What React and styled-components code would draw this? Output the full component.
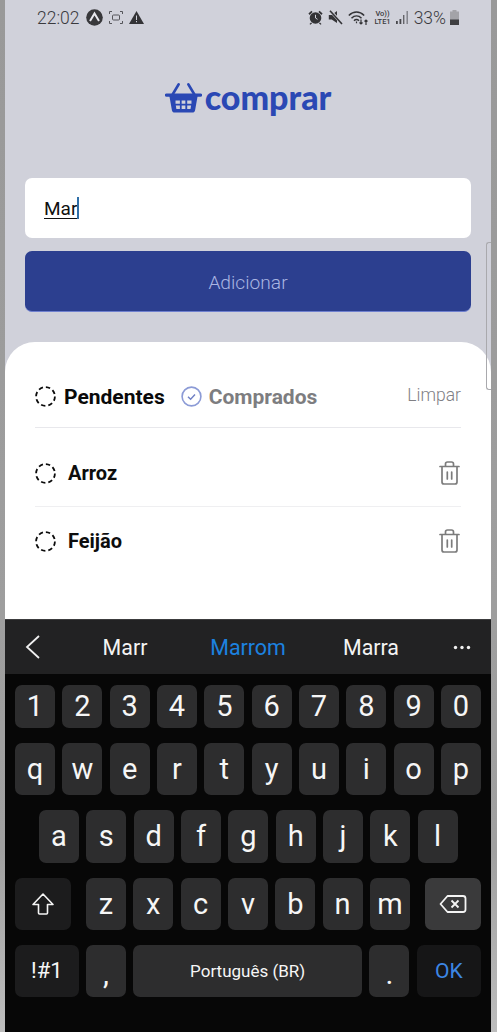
import React from 'react'
import styled, { createGlobalStyle } from 'styled-components'

const Global = createGlobalStyle`
  html, body { margin: 0; padding: 0; background: #9c9c9c; }
  * { box-sizing: border-box; }
`

const Page = styled.div`
  width: 497px;
  height: 1032px;
  padding: 0 6px 0 5px;
  overflow: hidden;
  background: linear-gradient(#999 0, #a0a0a0 850px, #bdbdbd 1032px);
  font-family: Roboto, "Liberation Sans", sans-serif;
`

const Screen = styled.div`
  position: relative;
  height: 100%;
  display: flex;
  flex-direction: column;
  background: #d0d1da;
`

const StatusBar = styled.div`
  height: 35px;
  display: flex;
  align-items: center;
  justify-content: space-between;
  padding: 0 31px 0 32px;
  color: #3a3a3d;
  font-size: 17.5px;
  font-weight: 300;
`

const StatusGroup = styled.div`
  display: flex;
  align-items: center;
  gap: ${props => props.gap || 5}px;
`

const Lte = styled.span`
  display: flex;
  flex-direction: column;
  align-items: center;
  font-size: 7.5px;
  line-height: 7.5px;
  font-weight: 500;
`

const Logo = styled.div`
  display: flex;
  align-items: center;
  justify-content: center;
  gap: 3px;
  margin-top: 46px;
  height: 34px;
  color: #2a48b4;
`

const LogoText = styled.span`
  font-family: Lato, Roboto, sans-serif;
  font-weight: 900;
  font-size: 34px;
  line-height: 34px;
  margin-top: -2px;
`

const Form = styled.div`
  display: flex;
  flex-direction: column;
  gap: 13px;
  padding: 0 20px;
  margin-top: 63px;
`

const Input = styled.div`
  height: 60px;
  background: #fff;
  border-radius: 7px;
  display: flex;
  align-items: center;
  padding-left: 19px;
  font-size: 19px;
  color: #111;
`

const Typed = styled.span`
  text-decoration: underline;
  text-underline-offset: 3px;
  text-decoration-thickness: 1px;
`

const Caret = styled.span`
  width: 2px;
  height: 22px;
  background: #2f6fa8;
`

const AddButton = styled.div`
  height: 61px;
  padding-top: 2px;
  background: #2c3f8f;
  border-radius: 7px;
  border-bottom: 1px solid #6f80cf;
  display: flex;
  align-items: center;
  justify-content: center;
  color: #aab6e2;
  font-size: 19.2px;
  font-weight: 300;
`

const Sheet = styled.div`
  flex: 1;
  margin-top: 30px;
  padding: 0 30px;
  background: #fff;
  border-radius: 30px 30px 0 0;
`

const Filters = styled.div`
  height: 86px;
  padding-top: 24px;
  display: flex;
  align-items: center;
  border-bottom: 1px solid #e8e8ec;
`

const Filter = styled.div`
  display: flex;
  align-items: center;
  gap: ${props => props.muted ? 7 : 8}px;
  margin-right: 16px;
  font-size: 21px;
  font-weight: 700;
  color: ${props => props.muted ? '#7d7d80' : '#0a0a0a'};
`

const Clear = styled.span`
  margin-left: auto;
  margin-top: -4px;
  font-size: 17.5px;
  font-weight: 300;
  color: #808084;
`

const Item = styled.div`
  height: ${props => props.last ? 68 : 79}px;
  padding-top: ${props => props.last ? 0 : 12}px;
  display: flex;
  align-items: center;
  gap: 12px;
  border-bottom: ${props => props.last ? 'none' : '1px solid #efeff1'};
  font-size: 20px;
  font-weight: 700;
  color: #0d0d0d;
`

const Trash = styled.svg`
  margin-left: auto;
  margin-right: 1px;
`

const ScrollThumb = styled.div`
  position: absolute;
  top: 242px;
  right: 0;
  width: 5px;
  height: 148px;
  border: 1px solid #a9a9ad;
  border-right: none;
  border-radius: 3px 0 0 3px;
`

const Keyboard = styled.div`
  height: 413px;
  background: #070707;
  color: #f4f4f4;
`

const Suggestions = styled.div`
  height: 55px;
  margin-bottom: 11px;
  padding: 0 20px;
  background: #222223;
  border-top: 1px solid #3c3c3e;
  display: grid;
  grid-template-columns: 38.5px 1fr 1fr 1fr 38.5px;
  align-items: center;
  font-size: 21.4px;
`

const Suggestion = styled.span`
  text-align: center;
  color: ${props => props.active ? '#1c82e0' : '#f4f4f4'};
`

const Rows = styled.div`
  display: flex;
  flex-direction: column;
  gap: 15px;
  padding: 0 10px;
`

const Row = styled.div`
  height: ${props => props.h || 52}px;
  display: flex;
  gap: 7.33px;
  padding-left: ${props => props.indent || 0}px;
`

const Key = styled.div`
  flex: 0 0 ${props => props.w || 40}px;
  margin-left: ${props => props.push || 0}px;
  padding-bottom: ${props => props.low ? 8 : 0}px;
  display: flex;
  align-items: ${props => props.low ? 'flex-end' : 'center'};
  justify-content: center;
  border-radius: 7px;
  background: ${props => props.bg || '#2d2d2e'};
  color: ${props => props.color || '#f6f6f6'};
  font-size: ${props => props.size || 29}px;
  line-height: 1;
`

const Dots = styled.svg`
  justify-self: end;
`

function Dashed({ size = 21 }) {
  return (
    <svg width={size} height={size} viewBox="0 0 21 21" fill="none">
      <circle cx="10.5" cy="10.5" r="9.4" stroke="#0b0b0b" strokeWidth="1.8" strokeDasharray="4.4 3" />
    </svg>
  )
}

function Basket() {
  return (
    <svg width="37" height="32" viewBox="0 0 38 32" fill="none">
      <path d="M14 2 L8 12 M24 2 L30 12" stroke="currentColor" strokeWidth="2.8" strokeLinecap="round" />
      <path d="M1.5 13h35" stroke="currentColor" strokeWidth="3.4" strokeLinecap="round" />
      <path fillRule="evenodd" fill="currentColor" d="M4.5 14h29l-2.6 14.6c-.3 1.5-1.4 2.4-2.8 2.4H9.9c-1.4 0-2.5-.9-2.8-2.4L4.5 14Zm6.300 4.500h4.500v3.400h-4.500Zm6.300 0h3.800v3.400h-3.800Zm5.700 0h4.400v3.400h-4.400Zm-11.700 5.300h4.200v3.400h-3.600Zm6 0h3.800v3.400h-3.800Zm5.700 0h4l-.6 3.400h-3.400Z" />
    </svg>
  )
}

function TrashIcon() {
  return (
    <Trash width="21" height="24" viewBox="0 0 21 24" fill="none" stroke="#7c7c7c" strokeWidth="1.7" strokeLinejoin="round" strokeLinecap="round">
      <path d="M1 5.5h19" />
      <path d="M6.5 5V3c0-1.100.8-2 2-2h4c1.200 0 2 .9 2 2v2" />
      <path d="M3 6v15c0 1.200.8 2 2 2h11c1.200 0 2-.8 2-2V6" />
      <path d="M8.300 11v7M12.700 11v7" />
    </Trash>
  )
}

function Alarm() {
  return (
    <svg width="15" height="15" viewBox="0 0 15 15" fill="#333336">
      <circle cx="7.5" cy="8" r="5.8" />
      <path d="M.4 3.600 3.400.8l1.200 1.200L1.700 5ZM14.600 3.600 11.600.8l-1.200 1.200L13.300 5ZM3 12.500l-1.500 1.500.9.800 1.700-1.500ZM12 12.500l1.500 1.500-.9.800-1.700-1.500Z" />
      <path d="M7.500 4.800V8l2 1.300" stroke="#d0d1da" strokeWidth="1" fill="none" />
    </svg>
  )
}

function Muted() {
  return (
    <svg width="15" height="15" viewBox="0 0 15 15" fill="#333336">
      <path d="M.8 5h2.900L9 1v12L3.700 9.500H.8Z" />
      <path d="M2.500 1 14 13.500" stroke="#d0d1da" strokeWidth="3" />
      <path d="M2 .8 14 14" stroke="#333336" strokeWidth="1.600" />
    </svg>
  )
}

function Wifi() {
  return (
    <svg width="21" height="16" viewBox="0 0 21 16" fill="none" stroke="#333336" strokeWidth="1.500">
      <path d="M.8 5.500C5.500.8 11.500.8 16.200 5.500" />
      <path d="M3.500 8.200C6.500 5.200 10.500 5.200 13.500 8.200" />
      <path d="M6 10.800c1.600-1.600 3.400-1.600 5 0" />
      <path d="M8.500 11.500v1.800M13 9.500V14M11.500 12.500 13 14l1.500-1.500M18 15v-5M16.500 11.500 18 10l1.500 1.500" strokeWidth="1.200" />
    </svg>
  )
}

function Signal() {
  return (
    <svg width="13" height="13" viewBox="0 0 13 13" fill="#48484c">
      <rect x="0" y="10" width="1.800" height="3" />
      <rect x="3.500" y="8" width="1.800" height="5" />
      <rect x="7" y="4" width="1.400" height="9" opacity=".8" />
      <rect x="10.500" y="0" width="1.400" height="13" opacity=".6" />
    </svg>
  )
}

function Battery() {
  return (
    <svg width="11" height="15" viewBox="0 0 10 15">
      <path d="M3 0h4v1.500h2.500V15H.5V1.500H3Z" fill="#a3a3a8" />
      <rect x=".5" y="9.500" width="9" height="5.500" fill="#3f3f42" />
    </svg>
  )
}

const numbers = '1234567890'.split('')
const topRow = 'qwertyuiop'.split('')
const midRow = 'asdfghjkl'.split('')
const lowRow = 'zxcvbnm'.split('')

export default function App() {
  return (
    <Page>
      <Global />
      <Screen>
        <StatusBar>
          <StatusGroup gap={6}>
            <span>22:02</span>
            <svg width="17" height="17" viewBox="0 0 17 17">
              <circle cx="8.5" cy="8.5" r="8.3" fill="#38383b" />
              <path d="M4 12 8.500 4.500 13 12" fill="none" stroke="#e8e8ee" strokeWidth="2" />
            </svg>
            <svg width="14" height="13" viewBox="0 0 14 13" fill="none" stroke="#55555a" strokeWidth="1">
              <path d="M.5 3V.5H3M11 .5h2.500V3M.5 10v2.500H3M11 12.500h2.500V10" />
              <rect x="3.5" y="4" width="7" height="5" rx="1" />
            </svg>
            <svg width="15" height="13" viewBox="0 0 15 13">
              <path d="M7.500 0 15 13H0Z" fill="#333336" />
              <path d="M7 4.500h1V9H7ZM7 10h1v1.200H7Z" fill="#d0d1da" />
            </svg>
          </StatusGroup>
          <StatusGroup>
            <Alarm />
            <Muted />
            <Wifi />
            <Lte><span>Vo))</span><span>LTE1</span></Lte>
            <Signal />
            <StatusGroup gap={3}>
              <span>33%</span>
              <Battery />
            </StatusGroup>
          </StatusGroup>
        </StatusBar>

        <Logo>
          <Basket />
          <LogoText>comprar</LogoText>
        </Logo>

        <Form>
          <Input>
            <Typed>Mar</Typed>
            <Caret />
          </Input>
          <AddButton>Adicionar</AddButton>
        </Form>

        <ScrollThumb />

        <Sheet>
          <Filters>
            <Filter>
              <Dashed />
              Pendentes
            </Filter>
            <Filter muted>
              <svg width="21" height="21" viewBox="0 0 21 21" fill="none" stroke="#8c9bd6" strokeWidth="1.6">
                <circle cx="10.5" cy="10.5" r="9.4" />
                <path d="M7 10.800 9.600 13.300 14 8.500" stroke="#6f7fc4" strokeWidth="1.4" />
              </svg>
              Comprados
            </Filter>
            <Clear>Limpar</Clear>
          </Filters>
          <Item>
            <Dashed />
            Arroz
            <TrashIcon />
          </Item>
          <Item last>
            <Dashed />
            Feijão
            <TrashIcon />
          </Item>
        </Sheet>

        <Keyboard>
          <Suggestions>
            <svg width="16" height="24" viewBox="0 0 16 24" fill="none" stroke="#f0f0f0" strokeWidth="1.8">
              <path d="M14 1 2 12l12 11" />
            </svg>
            <Suggestion>Marr</Suggestion>
            <Suggestion active>Marrom</Suggestion>
            <Suggestion>Marra</Suggestion>
            <Dots width="18" height="5" viewBox="0 0 18 5" fill="#f0f0f0">
              <circle cx="2.5" cy="2.5" r="1.7" />
              <circle cx="9" cy="2.5" r="1.7" />
              <circle cx="15.5" cy="2.5" r="1.7" />
            </Dots>
          </Suggestions>
          <Rows>
            <Row h={43}>
              {numbers.map(k => <Key key={k}>{k}</Key>)}
            </Row>
            <Row>
              {topRow.map(k => <Key key={k}>{k}</Key>)}
            </Row>
            <Row h={53} indent={24}>
              {midRow.map(k => <Key key={k}>{k}</Key>)}
            </Row>
            <Row>
              <Key w={56} bg="#1c1c1d">
                <svg width="24" height="24" viewBox="0 0 24 24" fill="none" stroke="#f4f4f4" strokeWidth="1.6" strokeLinejoin="round">
                  <path d="M12 2 2 12.500h5.500V21a1 1 0 0 0 1 1h7a1 1 0 0 0 1-1v-8.500H22Z" />
                </svg>
              </Key>
              <Key push={7.67}>{lowRow[0]}</Key>
              {lowRow.slice(1).map(k => <Key key={k}>{k}</Key>)}
              <Key w={56} push={7.67} bg="#3a3a3b">
                <svg width="28" height="20" viewBox="0 0 28 20" fill="none" stroke="#f4f4f4" strokeWidth="1.8" strokeLinejoin="round">
                  <path d="M8.500 2H24a2.500 2.500 0 0 1 2.500 2.500v11A2.500 2.500 0 0 1 24 18H8.500L1.500 10Z" />
                  <path d="m12.500 6.500 7 7M19.500 6.500l-7 7" />
                </svg>
              </Key>
            </Row>
            <Row>
              <Key w={63.5} bg="#1c1c1d" size={22}>!#1</Key>
              <Key low size={30}>,</Key>
              <Key w={229} size={17}>Português (BR)</Key>
              <Key low size={30}>.</Key>
              <Key w={64} bg="#161617" color="#3d86e4" size={21}>OK</Key>
            </Row>
          </Rows>
        </Keyboard>
      </Screen>
    </Page>
  )
}
